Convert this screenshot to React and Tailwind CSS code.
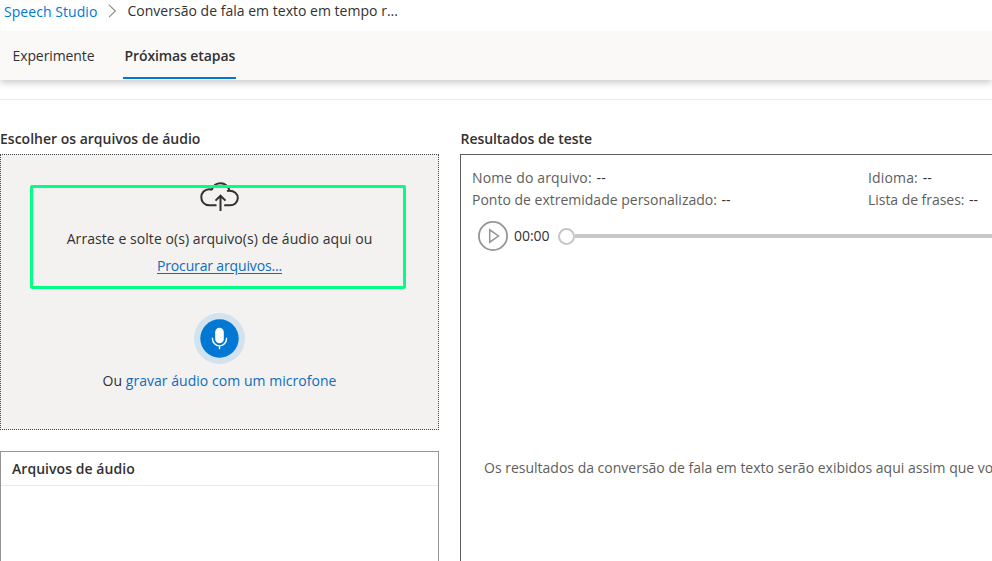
function Chevron() {
  return (
    <svg className="ml-[11px] h-[14px] w-[9px] shrink-0" viewBox="0 0 9 14" fill="none" stroke="#8a8886" strokeWidth="1.1">
      <path d="M1 .8 7.4 7 1 13.2" />
    </svg>
  );
}

function CloudUpload() {
  return (
    <svg className="h-[30px] w-[40px]" viewBox="0 0 40 30" fill="none" stroke="#323130" strokeWidth="2">
      <path d="M16.500 24.300H9.100C4.300 24.300 1.300 20.600 1.300 16.300c0-4.600 3.400-8 7.800-8 1 0 2 .1 2.900.5" />
      <path d="M11.700 8.800C13.200 4.900 16.500 2.300 20.500 2.300c4.600 0 8.200 3.300 8.900 7.900" />
      <path d="M27 10.200c.7-.3 1.500-.5 2.500-.5 4.600 0 8.300 3.200 8.300 7.300s-3.400 7.300-7.800 7.300h-5.800" />
      <path d="M20.500 30V14.800M15.500 19.600l5-4.900 5 4.900" />
    </svg>
  );
}

function Microphone() {
  return (
    <svg className="h-[51px] w-[51px]" viewBox="0 0 51 51">
      <circle cx="25.500" cy="25.500" r="25.500" fill="#d2e2ef" />
      <circle cx="25.500" cy="25.500" r="19.200" fill="#0078d4" />
      <rect x="21.200" y="14.700" width="8.600" height="15.500" rx="4.300" fill="#fff" />
      <path d="M18.500 24.700v1.200a7 7 0 0 0 14 0v-1.200M25.500 32.800v3.400" fill="none" stroke="#fff" strokeWidth="1.400" />
    </svg>
  );
}

function DropZone() {
  return (
    <div className="relative flex h-[276px] flex-col items-center border border-dotted border-[#484644] bg-[#f3f2f1] pt-[26px]">
      <CloudUpload />
      <p className="mt-[18px] tracking-[0.06px]">Arraste e solte o(s) arquivo(s) de áudio aqui ou</p>
      <a className="mt-[7px] tracking-[-0.15px] text-[#0f6cbd] underline underline-offset-2">Procurar arquivos...</a>
      <div className="mt-[37px]">
        <Microphone />
      </div>
      <p className="mt-[7px] tracking-[0.04px]">
        Ou <a className="text-[#0f6cbd]">gravar áudio com um microfone</a>
      </p>
      <div className="absolute top-[30px] left-[29px] h-[104px] w-[376px] rounded-[2px] border-3 border-[#00ff84]" />
    </div>
  );
}

function Field({ label }) {
  return (
    <p className="h-[22px] leading-[22px] text-[#605e5c]">
      {label} <span className="ml-px text-[#323130]">--</span>
    </p>
  );
}

function Player() {
  return (
    <div className="mt-[10px] flex h-[30px] items-center pl-[6px]">
      <svg className="h-[30px] w-[30px] shrink-0" viewBox="0 0 30 30" fill="none" stroke="#979593">
        <circle cx="15" cy="15" r="14.100" strokeWidth="1.800" />
        <path d="M11.700 8.800v12.400l8.800-6.200z" strokeWidth="1.500" />
      </svg>
      <span className="ml-[6px] w-[37px] tracking-[-0.05px]">00:00</span>
      <span className="ml-[7px] h-[17px] w-[17px] shrink-0 rounded-full border-2 border-[#c8c6c4] bg-white" />
      <span className="h-1 flex-1 bg-[#c8c8c8]" />
    </div>
  );
}

export default function App() {
  return (
    <div className="flex h-[561px] w-[992px] flex-col overflow-hidden bg-white font-['Open_Sans','Noto_Sans',sans-serif] text-[14px] leading-[20px] text-[#323130]">
      <nav className="relative z-10 flex h-[31px] shrink-0 items-start bg-white pl-[4px]">
        <a className="mt-[2px] tracking-[0.06px] text-[#0078d4]">Speech Studio</a>
        <div className="mt-[4px] flex">
          <Chevron />
        </div>
        <span className="mt-px ml-[10px] tracking-[0.02px]">Conversão de fala em texto em tempo r...</span>
      </nav>

      <div className="flex h-[49px] shrink-0 items-stretch bg-[#faf9f8] pl-[12px] shadow-[0_3px_7px_rgba(0,0,0,0.2)]">
        <span className="w-[111px] pt-[15px] pl-[0.5px] tracking-[-0.1px]">Experimente</span>
        <span className="h-[48px] w-[113px] border-b-2 border-[#0078d4] pt-[15px] pl-[1.5px] font-[580] tracking-[-0.1px] whitespace-nowrap">
          Próximas etapas
        </span>
      </div>

      <div className="mt-[19px] h-px shrink-0 bg-[#edebe9]" />

      <main className="flex min-h-0 flex-1 gap-[21px] pt-[29px]">
        <section className="flex w-[439px] shrink-0 flex-col">
          <h2 className="h-[25px] shrink-0 font-[580]">Escolher os arquivos de áudio</h2>
          <DropZone />
          <div className="mt-[21px] flex-1 border border-b-0 border-[#979593]">
            <h3 className="h-[34px] border-b border-[#edebe9] pt-[7px] pl-[11px] font-[580] tracking-[0.05px]">Arquivos de áudio</h3>
          </div>
        </section>

        <section className="flex min-w-0 flex-1 flex-col">
          <h2 className="h-[25px] shrink-0 pl-[0.5px] font-[580] tracking-[-0.05px]">Resultados de teste</h2>
          <div className="flex-1 border-t border-l border-[#605e5c] pt-[12px] pl-[11px]">
            <div className="flex">
              <div className="w-[396px] shrink-0">
                <div className="tracking-[0.15px]">
                  <Field label="Nome do arquivo:" />
                </div>
                <Field label="Ponto de extremidade personalizado:" />
              </div>
              <div className="shrink-0 whitespace-nowrap">
                <div className="tracking-[0.15px]">
                  <Field label="Idioma:" />
                </div>
                <div className="tracking-[-0.04px]">
                  <Field label="Lista de frases:" />
                </div>
              </div>
            </div>
            <Player />
            <p className="mt-[207px] pl-[12px] whitespace-nowrap text-[#605e5c]">
              Os resultados da conversão de fala em texto serão exibidos aqui assim que vo
            </p>
          </div>
        </section>
      </main>
    </div>
  );
}
